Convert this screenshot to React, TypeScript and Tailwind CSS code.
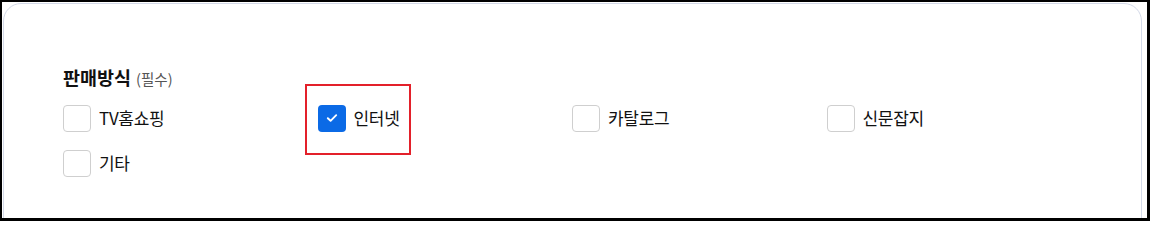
import React, { useState } from 'react';

const OPTIONS = ['TV홈쇼핑', '인터넷', '카탈로그', '신문잡지', '기타'];

const CheckIcon: React.FC = () => (
  <svg width="12" height="10" viewBox="0 0 12 10" fill="none">
    <path d="M1.8 5.2 4.6 7.8 10.2 2.2" stroke="white" strokeWidth="1.9" strokeLinecap="round" strokeLinejoin="round" />
  </svg>
);

const App: React.FC = () => {
  const [selected, setSelected] = useState<string[]>(['인터넷']);

  const toggle = (name: string) => {
    setSelected(prev => (prev.includes(name) ? prev.filter(n => n !== name) : [...prev, name]));
  };

  return (
    <div
      className="relative w-[1150px] h-[221px] overflow-hidden bg-white border-l-2 border-t-2 border-r-[3px] border-b-[3px] border-black pl-px pt-px"
      style={{ fontFamily: '"Noto Sans CJK KR", "Noto Sans", sans-serif' }}
    >
      <div className="w-[1139px] h-[260px] rounded-[18px] border border-[#d3d9e8] bg-white pl-[59px] pt-[60px]">
        <div className="flex items-baseline gap-[5px] h-[27px]">
          <span className="text-[18.5px] font-bold text-[#111]">판매방식</span>
          <span className="text-[14.5px] text-[#555]">(필수)</span>
        </div>
        <div className="mt-[13px] grid grid-cols-4 w-[1018px] gap-y-[17px]">
          {OPTIONS.map(opt => {
            const checked = selected.includes(opt);
            return (
              <label key={opt} className="flex items-center gap-[8px] h-[28px] cursor-pointer">
                <span
                  onClick={() => toggle(opt)}
                  className={
                    checked
                      ? 'flex w-[28px] h-[27px] items-center justify-center rounded-[4px] bg-[#0b6ae6]'
                      : 'flex w-[28px] h-[27px] items-center justify-center rounded-[4px] border border-[#cfcfcf] bg-white'
                  }
                >
                  {checked && <CheckIcon />}
                </span>
                <span className="text-[17px] text-[#111] tracking-[-0.3px]">{opt}</span>
              </label>
            );
          })}
        </div>
      </div>
      <div className="absolute left-[303px] top-[82px] w-[106px] h-[71px] border-2 border-[#e3202a] pointer-events-none" />
    </div>
  );
};

export default App;
